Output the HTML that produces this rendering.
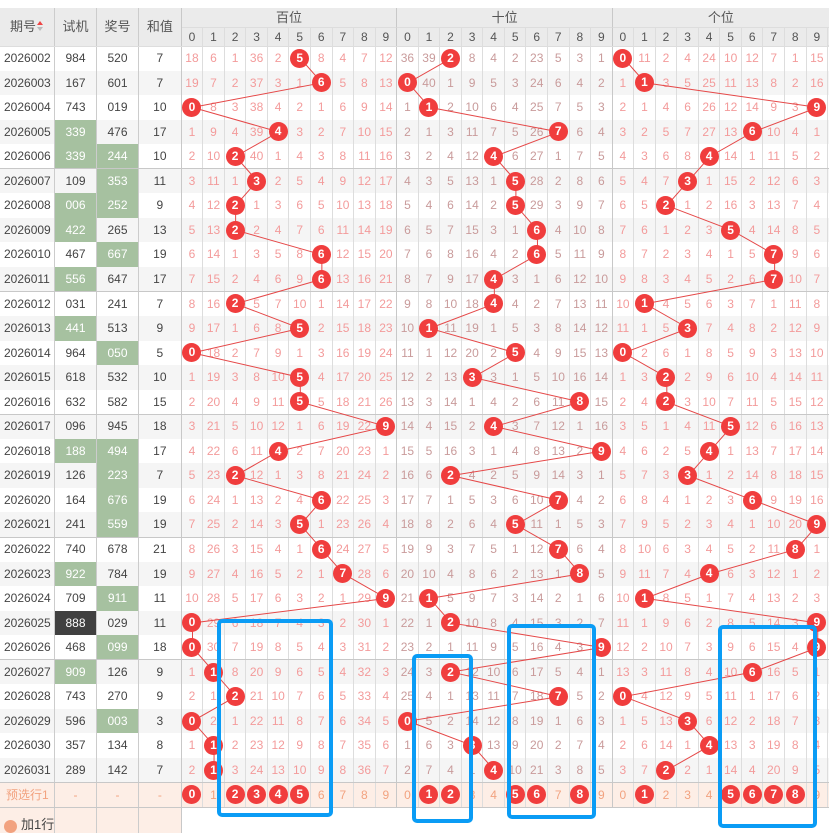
<!DOCTYPE html>
<html><head><meta charset="utf-8"><style>
*{margin:0;padding:0;box-sizing:border-box}
body{width:829px;height:832px;overflow:hidden;background:#fff;font-family:"Liberation Sans","Noto Sans CJK SC",sans-serif;font-size:12px;position:relative}
.r{position:absolute;left:0;width:829px;height:24.55px;display:flex;background:#fff}
.r.g{background:#f5f5f5}
.r>*{flex:none;height:100%;line-height:24.5px;text-align:center;border-right:1px solid #ddd;font-style:normal}
.r>span{color:#444}
.r>span:nth-child(1){width:55px;text-align:left;padding-left:4px;border-right-color:#ccc}
.r>span:nth-child(2),.r>span:nth-child(3){width:42px;border-right-color:#ccc}
.r>span:nth-child(4){width:42.7px;border-right-color:#c8c8c8}
.r>i{width:21.56px;color:#f39b9b;position:relative}
.r>i:nth-child(n+15):nth-child(-n+24){color:#c99b9b}
.r>i:nth-child(14),.r>i:nth-child(24){border-right-color:#c8c8c8}
.r>span.gn{background:#a6c1a0;color:#fff}
.r>span.dk{background:#404040;color:#fff}
b{position:absolute;left:50%;top:50%;width:19px;height:19px;margin:-9.5px 0 0 -9.5px;border-radius:50%;background:#f03d3d;color:#fff;line-height:19px;text-align:center;font-weight:bold;font-size:12px;z-index:2}
.hl{position:absolute;left:0;width:829px;height:1px;background:#c8c8c8;z-index:1}
.hd{position:absolute;top:8px;height:38px;background:#ebebeb;color:#555;font-size:13px}
.pre{background:#fdeee6 !important}
.pre>span,.pre>i{color:#f2a27f !important}
.dh{position:absolute;top:28px;left:181.7px;height:18px;display:flex;background:#ebebeb;color:#555}
.dh>i{flex:none;width:21.56px;text-align:center;line-height:18px;font-style:normal;border-right:1px solid #ddd}
.dh>i:nth-child(10),.dh>i:nth-child(20){border-right-color:#c8c8c8}
</style></head><body>
<div class="hd" style="left:0;width:829px;border-bottom:1px solid #ddd"></div>
<div class="hd" style="left:0;width:55px;line-height:38px;padding-left:10px;border-right:1px solid #ccc">期号<span style="position:absolute;left:37px;top:13px;width:0;height:0;border:3px solid transparent;border-bottom:4px solid #e44;border-top:0"></span><span style="position:absolute;left:37px;top:19px;width:0;height:0;border:3px solid transparent;border-top:4px solid #bbb;border-bottom:0"></span></div>
<div class="hd" style="left:55px;width:42px;line-height:38px;text-align:center;border-right:1px solid #ccc">试机</div>
<div class="hd" style="left:97px;width:42px;line-height:38px;text-align:center;border-right:1px solid #ccc">奖号</div>
<div class="hd" style="left:139px;width:42.7px;line-height:38px;text-align:center;border-right:1px solid #c8c8c8">和值</div>
<div class="hd" style="left:181.7px;width:215.6px;height:20px;line-height:19px;text-align:center;border-right:1px solid #c8c8c8;border-bottom:1px solid #ddd">百位</div>
<div class="hd" style="left:397.3px;width:215.6px;height:20px;line-height:19px;text-align:center;border-right:1px solid #c8c8c8;border-bottom:1px solid #ddd">十位</div>
<div class="hd" style="left:612.9px;width:216.1px;height:20px;line-height:19px;text-align:center;border-bottom:1px solid #ddd">个位</div>
<div class="dh"><i>0</i><i>1</i><i>2</i><i>3</i><i>4</i><i>5</i><i>6</i><i>7</i><i>8</i><i>9</i><i>0</i><i>1</i><i>2</i><i>3</i><i>4</i><i>5</i><i>6</i><i>7</i><i>8</i><i>9</i><i>0</i><i>1</i><i>2</i><i>3</i><i>4</i><i>5</i><i>6</i><i>7</i><i>8</i><i>9</i></div>

<div class="r" style="top:46px"><span>2026002</span><span>984</span><span>520</span><span>7</span><i>18</i><i>6</i><i>1</i><i>36</i><i>2</i><i><b>5</b></i><i>8</i><i>4</i><i>7</i><i>12</i><i>36</i><i>39</i><i><b>2</b></i><i>8</i><i>4</i><i>2</i><i>23</i><i>5</i><i>3</i><i>1</i><i><b>0</b></i><i>11</i><i>2</i><i>4</i><i>24</i><i>10</i><i>12</i><i>7</i><i>1</i><i>15</i></div>
<div class="r g" style="top:70.55px"><span>2026003</span><span>167</span><span>601</span><span>7</span><i>19</i><i>7</i><i>2</i><i>37</i><i>3</i><i>1</i><i><b>6</b></i><i>5</i><i>8</i><i>13</i><i><b>0</b></i><i>40</i><i>1</i><i>9</i><i>5</i><i>3</i><i>24</i><i>6</i><i>4</i><i>2</i><i>1</i><i><b>1</b></i><i>3</i><i>5</i><i>25</i><i>11</i><i>13</i><i>8</i><i>2</i><i>16</i></div>
<div class="r" style="top:95.1px"><span>2026004</span><span>743</span><span>019</span><span>10</span><i><b>0</b></i><i>8</i><i>3</i><i>38</i><i>4</i><i>2</i><i>1</i><i>6</i><i>9</i><i>14</i><i>1</i><i><b>1</b></i><i>2</i><i>10</i><i>6</i><i>4</i><i>25</i><i>7</i><i>5</i><i>3</i><i>2</i><i>1</i><i>4</i><i>6</i><i>26</i><i>12</i><i>14</i><i>9</i><i>3</i><i><b>9</b></i></div>
<div class="r g" style="top:119.65px"><span>2026005</span><span class="gn">339</span><span>476</span><span>17</span><i>1</i><i>9</i><i>4</i><i>39</i><i><b>4</b></i><i>3</i><i>2</i><i>7</i><i>10</i><i>15</i><i>2</i><i>1</i><i>3</i><i>11</i><i>7</i><i>5</i><i>26</i><i><b>7</b></i><i>6</i><i>4</i><i>3</i><i>2</i><i>5</i><i>7</i><i>27</i><i>13</i><i><b>6</b></i><i>10</i><i>4</i><i>1</i></div>
<div class="r" style="top:144.2px"><span>2026006</span><span class="gn">339</span><span class="gn">244</span><span>10</span><i>2</i><i>10</i><i><b>2</b></i><i>40</i><i>1</i><i>4</i><i>3</i><i>8</i><i>11</i><i>16</i><i>3</i><i>2</i><i>4</i><i>12</i><i><b>4</b></i><i>6</i><i>27</i><i>1</i><i>7</i><i>5</i><i>4</i><i>3</i><i>6</i><i>8</i><i><b>4</b></i><i>14</i><i>1</i><i>11</i><i>5</i><i>2</i></div>
<div class="r g" style="top:168.75px"><span>2026007</span><span>109</span><span class="gn">353</span><span>11</span><i>3</i><i>11</i><i>1</i><i><b>3</b></i><i>2</i><i>5</i><i>4</i><i>9</i><i>12</i><i>17</i><i>4</i><i>3</i><i>5</i><i>13</i><i>1</i><i><b>5</b></i><i>28</i><i>2</i><i>8</i><i>6</i><i>5</i><i>4</i><i>7</i><i><b>3</b></i><i>1</i><i>15</i><i>2</i><i>12</i><i>6</i><i>3</i></div>
<div class="r" style="top:193.3px"><span>2026008</span><span class="gn">006</span><span class="gn">252</span><span>9</span><i>4</i><i>12</i><i><b>2</b></i><i>1</i><i>3</i><i>6</i><i>5</i><i>10</i><i>13</i><i>18</i><i>5</i><i>4</i><i>6</i><i>14</i><i>2</i><i><b>5</b></i><i>29</i><i>3</i><i>9</i><i>7</i><i>6</i><i>5</i><i><b>2</b></i><i>1</i><i>2</i><i>16</i><i>3</i><i>13</i><i>7</i><i>4</i></div>
<div class="r g" style="top:217.85px"><span>2026009</span><span class="gn">422</span><span>265</span><span>13</span><i>5</i><i>13</i><i><b>2</b></i><i>2</i><i>4</i><i>7</i><i>6</i><i>11</i><i>14</i><i>19</i><i>6</i><i>5</i><i>7</i><i>15</i><i>3</i><i>1</i><i><b>6</b></i><i>4</i><i>10</i><i>8</i><i>7</i><i>6</i><i>1</i><i>2</i><i>3</i><i><b>5</b></i><i>4</i><i>14</i><i>8</i><i>5</i></div>
<div class="r" style="top:242.4px"><span>2026010</span><span>467</span><span class="gn">667</span><span>19</span><i>6</i><i>14</i><i>1</i><i>3</i><i>5</i><i>8</i><i><b>6</b></i><i>12</i><i>15</i><i>20</i><i>7</i><i>6</i><i>8</i><i>16</i><i>4</i><i>2</i><i><b>6</b></i><i>5</i><i>11</i><i>9</i><i>8</i><i>7</i><i>2</i><i>3</i><i>4</i><i>1</i><i>5</i><i><b>7</b></i><i>9</i><i>6</i></div>
<div class="r g" style="top:266.95px"><span>2026011</span><span class="gn">556</span><span>647</span><span>17</span><i>7</i><i>15</i><i>2</i><i>4</i><i>6</i><i>9</i><i><b>6</b></i><i>13</i><i>16</i><i>21</i><i>8</i><i>7</i><i>9</i><i>17</i><i><b>4</b></i><i>3</i><i>1</i><i>6</i><i>12</i><i>10</i><i>9</i><i>8</i><i>3</i><i>4</i><i>5</i><i>2</i><i>6</i><i><b>7</b></i><i>10</i><i>7</i></div>
<div class="r" style="top:291.5px"><span>2026012</span><span>031</span><span>241</span><span>7</span><i>8</i><i>16</i><i><b>2</b></i><i>5</i><i>7</i><i>10</i><i>1</i><i>14</i><i>17</i><i>22</i><i>9</i><i>8</i><i>10</i><i>18</i><i><b>4</b></i><i>4</i><i>2</i><i>7</i><i>13</i><i>11</i><i>10</i><i><b>1</b></i><i>4</i><i>5</i><i>6</i><i>3</i><i>7</i><i>1</i><i>11</i><i>8</i></div>
<div class="r g" style="top:316.05px"><span>2026013</span><span class="gn">441</span><span>513</span><span>9</span><i>9</i><i>17</i><i>1</i><i>6</i><i>8</i><i><b>5</b></i><i>2</i><i>15</i><i>18</i><i>23</i><i>10</i><i><b>1</b></i><i>11</i><i>19</i><i>1</i><i>5</i><i>3</i><i>8</i><i>14</i><i>12</i><i>11</i><i>1</i><i>5</i><i><b>3</b></i><i>7</i><i>4</i><i>8</i><i>2</i><i>12</i><i>9</i></div>
<div class="r" style="top:340.6px"><span>2026014</span><span>964</span><span class="gn">050</span><span>5</span><i><b>0</b></i><i>18</i><i>2</i><i>7</i><i>9</i><i>1</i><i>3</i><i>16</i><i>19</i><i>24</i><i>11</i><i>1</i><i>12</i><i>20</i><i>2</i><i><b>5</b></i><i>4</i><i>9</i><i>15</i><i>13</i><i><b>0</b></i><i>2</i><i>6</i><i>1</i><i>8</i><i>5</i><i>9</i><i>3</i><i>13</i><i>10</i></div>
<div class="r g" style="top:365.15px"><span>2026015</span><span>618</span><span>532</span><span>10</span><i>1</i><i>19</i><i>3</i><i>8</i><i>10</i><i><b>5</b></i><i>4</i><i>17</i><i>20</i><i>25</i><i>12</i><i>2</i><i>13</i><i><b>3</b></i><i>3</i><i>1</i><i>5</i><i>10</i><i>16</i><i>14</i><i>1</i><i>3</i><i><b>2</b></i><i>2</i><i>9</i><i>6</i><i>10</i><i>4</i><i>14</i><i>11</i></div>
<div class="r" style="top:389.7px"><span>2026016</span><span>632</span><span>582</span><span>15</span><i>2</i><i>20</i><i>4</i><i>9</i><i>11</i><i><b>5</b></i><i>5</i><i>18</i><i>21</i><i>26</i><i>13</i><i>3</i><i>14</i><i>1</i><i>4</i><i>2</i><i>6</i><i>11</i><i><b>8</b></i><i>15</i><i>2</i><i>4</i><i><b>2</b></i><i>3</i><i>10</i><i>7</i><i>11</i><i>5</i><i>15</i><i>12</i></div>
<div class="r g" style="top:414.25px"><span>2026017</span><span>096</span><span>945</span><span>18</span><i>3</i><i>21</i><i>5</i><i>10</i><i>12</i><i>1</i><i>6</i><i>19</i><i>22</i><i><b>9</b></i><i>14</i><i>4</i><i>15</i><i>2</i><i><b>4</b></i><i>3</i><i>7</i><i>12</i><i>1</i><i>16</i><i>3</i><i>5</i><i>1</i><i>4</i><i>11</i><i><b>5</b></i><i>12</i><i>6</i><i>16</i><i>13</i></div>
<div class="r" style="top:438.8px"><span>2026018</span><span class="gn">188</span><span class="gn">494</span><span>17</span><i>4</i><i>22</i><i>6</i><i>11</i><i><b>4</b></i><i>2</i><i>7</i><i>20</i><i>23</i><i>1</i><i>15</i><i>5</i><i>16</i><i>3</i><i>1</i><i>4</i><i>8</i><i>13</i><i>2</i><i><b>9</b></i><i>4</i><i>6</i><i>2</i><i>5</i><i><b>4</b></i><i>1</i><i>13</i><i>7</i><i>17</i><i>14</i></div>
<div class="r g" style="top:463.35px"><span>2026019</span><span>126</span><span class="gn">223</span><span>7</span><i>5</i><i>23</i><i><b>2</b></i><i>12</i><i>1</i><i>3</i><i>8</i><i>21</i><i>24</i><i>2</i><i>16</i><i>6</i><i><b>2</b></i><i>4</i><i>2</i><i>5</i><i>9</i><i>14</i><i>3</i><i>1</i><i>5</i><i>7</i><i>3</i><i><b>3</b></i><i>1</i><i>2</i><i>14</i><i>8</i><i>18</i><i>15</i></div>
<div class="r" style="top:487.9px"><span>2026020</span><span>164</span><span class="gn">676</span><span>19</span><i>6</i><i>24</i><i>1</i><i>13</i><i>2</i><i>4</i><i><b>6</b></i><i>22</i><i>25</i><i>3</i><i>17</i><i>7</i><i>1</i><i>5</i><i>3</i><i>6</i><i>10</i><i><b>7</b></i><i>4</i><i>2</i><i>6</i><i>8</i><i>4</i><i>1</i><i>2</i><i>3</i><i><b>6</b></i><i>9</i><i>19</i><i>16</i></div>
<div class="r g" style="top:512.45px"><span>2026021</span><span>241</span><span class="gn">559</span><span>19</span><i>7</i><i>25</i><i>2</i><i>14</i><i>3</i><i><b>5</b></i><i>1</i><i>23</i><i>26</i><i>4</i><i>18</i><i>8</i><i>2</i><i>6</i><i>4</i><i><b>5</b></i><i>11</i><i>1</i><i>5</i><i>3</i><i>7</i><i>9</i><i>5</i><i>2</i><i>3</i><i>4</i><i>1</i><i>10</i><i>20</i><i><b>9</b></i></div>
<div class="r" style="top:537px"><span>2026022</span><span>740</span><span>678</span><span>21</span><i>8</i><i>26</i><i>3</i><i>15</i><i>4</i><i>1</i><i><b>6</b></i><i>24</i><i>27</i><i>5</i><i>19</i><i>9</i><i>3</i><i>7</i><i>5</i><i>1</i><i>12</i><i><b>7</b></i><i>6</i><i>4</i><i>8</i><i>10</i><i>6</i><i>3</i><i>4</i><i>5</i><i>2</i><i>11</i><i><b>8</b></i><i>1</i></div>
<div class="r g" style="top:561.55px"><span>2026023</span><span class="gn">922</span><span>784</span><span>19</span><i>9</i><i>27</i><i>4</i><i>16</i><i>5</i><i>2</i><i>1</i><i><b>7</b></i><i>28</i><i>6</i><i>20</i><i>10</i><i>4</i><i>8</i><i>6</i><i>2</i><i>13</i><i>1</i><i><b>8</b></i><i>5</i><i>9</i><i>11</i><i>7</i><i>4</i><i><b>4</b></i><i>6</i><i>3</i><i>12</i><i>1</i><i>2</i></div>
<div class="r" style="top:586.1px"><span>2026024</span><span>709</span><span class="gn">911</span><span>11</span><i>10</i><i>28</i><i>5</i><i>17</i><i>6</i><i>3</i><i>2</i><i>1</i><i>29</i><i><b>9</b></i><i>21</i><i><b>1</b></i><i>5</i><i>9</i><i>7</i><i>3</i><i>14</i><i>2</i><i>1</i><i>6</i><i>10</i><i><b>1</b></i><i>8</i><i>5</i><i>1</i><i>7</i><i>4</i><i>13</i><i>2</i><i>3</i></div>
<div class="r g" style="top:610.65px"><span>2026025</span><span class="dk">888</span><span>029</span><span>11</span><i><b>0</b></i><i>29</i><i>6</i><i>18</i><i>7</i><i>4</i><i>3</i><i>2</i><i>30</i><i>1</i><i>22</i><i>1</i><i><b>2</b></i><i>10</i><i>8</i><i>4</i><i>15</i><i>3</i><i>2</i><i>7</i><i>11</i><i>1</i><i>9</i><i>6</i><i>2</i><i>8</i><i>5</i><i>14</i><i>3</i><i><b>9</b></i></div>
<div class="r" style="top:635.2px"><span>2026026</span><span>468</span><span class="gn">099</span><span>18</span><i><b>0</b></i><i>30</i><i>7</i><i>19</i><i>8</i><i>5</i><i>4</i><i>3</i><i>31</i><i>2</i><i>23</i><i>2</i><i>1</i><i>11</i><i>9</i><i>5</i><i>16</i><i>4</i><i>3</i><i><b>9</b></i><i>12</i><i>2</i><i>10</i><i>7</i><i>3</i><i>9</i><i>6</i><i>15</i><i>4</i><i><b>9</b></i></div>
<div class="r g" style="top:659.75px"><span>2026027</span><span class="gn">909</span><span>126</span><span>9</span><i>1</i><i><b>1</b></i><i>8</i><i>20</i><i>9</i><i>6</i><i>5</i><i>4</i><i>32</i><i>3</i><i>24</i><i>3</i><i><b>2</b></i><i>12</i><i>10</i><i>6</i><i>17</i><i>5</i><i>4</i><i>1</i><i>13</i><i>3</i><i>11</i><i>8</i><i>4</i><i>10</i><i><b>6</b></i><i>16</i><i>5</i><i>1</i></div>
<div class="r" style="top:684.3px"><span>2026028</span><span>743</span><span>270</span><span>9</span><i>2</i><i>1</i><i><b>2</b></i><i>21</i><i>10</i><i>7</i><i>6</i><i>5</i><i>33</i><i>4</i><i>25</i><i>4</i><i>1</i><i>13</i><i>11</i><i>7</i><i>18</i><i><b>7</b></i><i>5</i><i>2</i><i><b>0</b></i><i>4</i><i>12</i><i>9</i><i>5</i><i>11</i><i>1</i><i>17</i><i>6</i><i>2</i></div>
<div class="r g" style="top:708.85px"><span>2026029</span><span>596</span><span class="gn">003</span><span>3</span><i><b>0</b></i><i>2</i><i>1</i><i>22</i><i>11</i><i>8</i><i>7</i><i>6</i><i>34</i><i>5</i><i><b>0</b></i><i>5</i><i>2</i><i>14</i><i>12</i><i>8</i><i>19</i><i>1</i><i>6</i><i>3</i><i>1</i><i>5</i><i>13</i><i><b>3</b></i><i>6</i><i>12</i><i>2</i><i>18</i><i>7</i><i>3</i></div>
<div class="r" style="top:733.4px"><span>2026030</span><span>357</span><span>134</span><span>8</span><i>1</i><i><b>1</b></i><i>2</i><i>23</i><i>12</i><i>9</i><i>8</i><i>7</i><i>35</i><i>6</i><i>1</i><i>6</i><i>3</i><i><b>3</b></i><i>13</i><i>9</i><i>20</i><i>2</i><i>7</i><i>4</i><i>2</i><i>6</i><i>14</i><i>1</i><i><b>4</b></i><i>13</i><i>3</i><i>19</i><i>8</i><i>4</i></div>
<div class="r g" style="top:757.95px"><span>2026031</span><span>289</span><span>142</span><span>7</span><i>2</i><i><b>1</b></i><i>3</i><i>24</i><i>13</i><i>10</i><i>9</i><i>8</i><i>36</i><i>7</i><i>2</i><i>7</i><i>4</i><i>1</i><i><b>4</b></i><i>10</i><i>21</i><i>3</i><i>8</i><i>5</i><i>3</i><i>7</i><i><b>2</b></i><i>2</i><i>1</i><i>14</i><i>4</i><i>20</i><i>9</i><i>5</i></div>
<div class="r pre" style="top:782.5px"><span style="padding-left:6px">预选行1</span><span>-</span><span>-</span><span>-</span><i><b>0</b></i><i>1</i><i><b>2</b></i><i><b>3</b></i><i><b>4</b></i><i><b>5</b></i><i>6</i><i>7</i><i>8</i><i>9</i><i>0</i><i><b>1</b></i><i><b>2</b></i><i>3</i><i>4</i><i><b>5</b></i><i><b>6</b></i><i>7</i><i><b>8</b></i><i>9</i><i>0</i><i><b>1</b></i><i>2</i><i>3</i><i>4</i><i><b>5</b></i><i><b>6</b></i><i><b>7</b></i><i><b>8</b></i><i>9</i></div>
<div class="r" style="top:807.05px;height:26px;background:transparent"><span style="background:#fdeee6;position:relative"><span style="position:absolute;left:4px;top:13px;width:13px;height:13px;border-radius:50%;background:#f2a27f"></span><span style="position:absolute;left:21px;top:6px;color:#444;font-size:13px;white-space:nowrap;line-height:24px">加1行</span></span><span style="background:#fdeee6"></span><span style="background:#fdeee6"></span><span style="background:#fdeee6"></span></div>

<div class="hl" style="top:46px;background:#ddd"></div>
<div class="hl" style="top:168.25px"></div>
<div class="hl" style="top:291px"></div>
<div class="hl" style="top:413.75px"></div>
<div class="hl" style="top:536.5px"></div>
<div class="hl" style="top:659.25px"></div>
<div class="hl" style="top:782px"></div>
<div class="hl" style="top:806.6px"></div>

<svg style="position:absolute;left:0;top:0;z-index:1" width="829" height="832">
<g transform="translate(192.5 58.3) scale(21.56 24.55)" fill="none" stroke="#e54848" stroke-width="1">
<polyline vector-effect="non-scaling-stroke" points="5,0 6,1 0,2 4,3 2,4 3,5 2,6 2,7 6,8 6,9 2,10 5,11 0,12 5,13 5,14 9,15 4,16 2,17 6,18 5,19 6,20 7,21 9,22 0,23 0,24 1,25 2,26 0,27 1,28 1,29"/>
<polyline vector-effect="non-scaling-stroke" points="12,0 10,1 11,2 17,3 14,4 15,5 15,6 16,7 16,8 14,9 14,10 11,11 15,12 13,13 18,14 14,15 19,16 12,17 17,18 15,19 17,20 18,21 11,22 12,23 19,24 12,25 17,26 10,27 13,28 14,29"/>
<polyline vector-effect="non-scaling-stroke" points="20,0 21,1 29,2 26,3 24,4 23,5 22,6 25,7 27,8 27,9 21,10 23,11 20,12 22,13 22,14 25,15 24,16 23,17 26,18 29,19 28,20 24,21 21,22 29,23 29,24 26,25 20,26 23,27 24,28 22,29"/>
</g></svg>
<svg style="position:absolute;left:0;top:0;z-index:3" width="829" height="832" fill="none" stroke="#0a9cf5" stroke-width="4">
<rect x="219" y="621" width="112" height="194" rx="3"/>
<rect x="414" y="656" width="57" height="165" rx="3"/>
<rect x="509" y="626" width="85" height="191" rx="3"/>
<rect x="720" y="627" width="95" height="199" rx="3"/>
</svg>
</body></html>
